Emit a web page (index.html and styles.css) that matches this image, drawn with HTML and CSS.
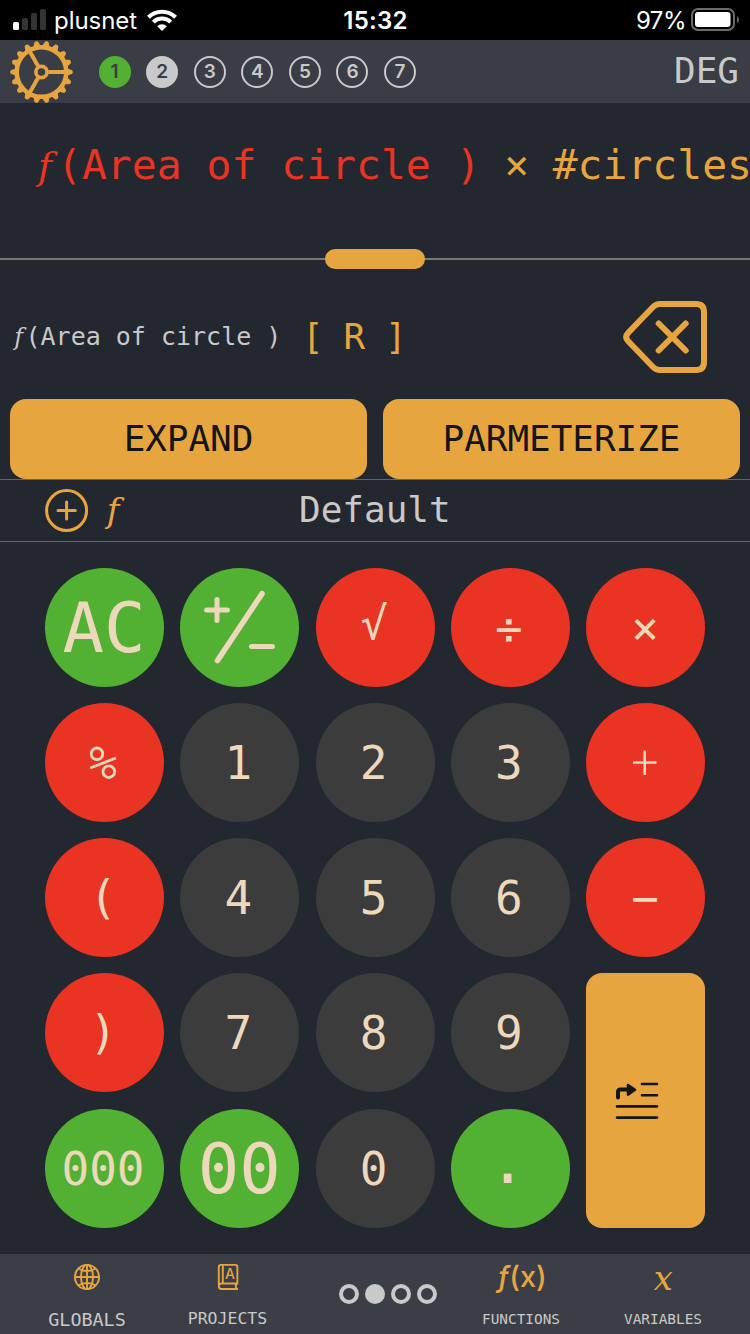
FILE: index.html
```html
<!DOCTYPE html>
<html lang="en">
<head>
<meta charset="utf-8">
<title>Calculator</title>
<link rel="stylesheet" href="styles.css">
</head>
<body>
<div class="app">
  <div class="status">
    <div class="status-left">
      <svg class="signal" width="34" height="22" viewBox="0 0 34 22"><rect x="0" y="13" width="6" height="8" rx="1.5" fill="#fff"/><g fill="#333"><rect x="9" y="9" width="6" height="12" rx="1.5"/><rect x="18" y="4" width="6" height="17" rx="1.5"/><rect x="27" y="0" width="6" height="21" rx="1.5"/></g></svg>
      <span class="carrier">plusnet</span>
      <svg class="wifi" width="30" height="22" viewBox="0 0 30 22"><g fill="none" stroke="#fff" stroke-width="4"><path d="M1.4 8.2A19.5 19.5 0 0 1 28.6 8.2"/><path d="M6.3 13.2A12.3 12.3 0 0 1 23.7 13.2"/></g><path d="M10.2 17.2A6.8 6.8 0 0 1 19.8 17.2L15 22Z" fill="#fff"/></svg>
    </div>
    <span class="clock">15:32</span>
    <div class="status-right">
      <span class="percent">97%</span>
      <svg width="48" height="24" viewBox="0 0 48 24"><rect x="1" y="1" width="42" height="21" rx="6" fill="none" stroke="#6b6b6b" stroke-width="2"/><rect x="4" y="4" width="35.5" height="15" rx="3" fill="#fff"/><path d="M46 8Q48 9 48 11.5Q48 14 46 15Z" fill="#6b6b6b"/></svg>
    </div>
  </div>

  <header class="toolbar">
    <svg class="gear" width="64" height="64" viewBox="-32.500 -32 64 64">
      <defs><path id="teeth" d="M26-3.6L30.600-1.8Q32 0 30.600 1.8L26 3.6ZM-26-3.6L-30.600-1.8Q-32 0-30.600 1.8L-26 3.6Z"/></defs>
      <g fill="#e7a53f"><use href="#teeth"/><use href="#teeth" transform="rotate(20)"/><use href="#teeth" transform="rotate(40)"/><use href="#teeth" transform="rotate(60)"/><use href="#teeth" transform="rotate(80)"/><use href="#teeth" transform="rotate(100)"/><use href="#teeth" transform="rotate(120)"/><use href="#teeth" transform="rotate(140)"/><use href="#teeth" transform="rotate(160)"/></g>
      <g fill="none" stroke="#e7a53f" stroke-width="4"><circle r="24.8" stroke-width="4.500"/><circle r="5.6" stroke-width="3.6"/><path d="M7 0H24M-3.5-6.1L-12-21M-3.5 6.1L-12 21"/></g>
    </svg>
    <div class="tabs">
      <span class="tab tab-green">1</span><span class="tab tab-solid">2</span><span class="tab">3</span><span class="tab">4</span><span class="tab">5</span><span class="tab">6</span><span class="tab">7</span>
    </div>
    <span class="mode">DEG</span>
  </header>

  <section class="expression"><span class="fn">𝑓</span><span>(Area of circle )</span><span class="operator">×</span><span class="variable">#circles</span></section>
  <div class="divider"><span class="handle"></span></div>

  <section class="detail">
    <div class="detail-name"><span class="fn">𝑓</span><span>(Area of circle )</span></div>
    <div class="register">[ R ]</div>
    <svg class="erase" width="86" height="74" viewBox="0 0 86 74" fill="none" stroke="#e7a53f" stroke-width="6" stroke-linecap="round" stroke-linejoin="round"><path d="M38 4H74Q82 4 82 12V62Q82 70 74 70H38Q34 70 31 67L6 41Q2.300 37 6 33L31 7Q34 4 38 4Z"/><path d="M33.700 23.500L60.700 50.500M60.700 23.500L33.700 50.500" transform="translate(3)"/></svg>
  </section>

  <div class="actions"><div class="action">EXPAND</div><div class="action">PARMETERIZE</div></div>

  <div class="layout-bar">
    <svg width="44" height="44" viewBox="0 0 44 44" fill="none" stroke="#e7a53f" stroke-width="3"><circle cx="21.6" cy="21.500" r="20"/><path d="M13 21.500H30.300M21.600 13V30" stroke-linecap="round"/></svg>
    <span class="fn">𝑓</span>
    <span class="layout-name">Default</span>
  </div>

  <main class="keys">
    <div class="key green large">AC</div>
    <div class="key green"><svg width="119" height="119" viewBox="0 0 119 119" fill="none" stroke="#edd8bc" stroke-width="5" stroke-linecap="round"><path d="M26.600 42H47.400M37 31.500V52.500M71.500 78.500H92.400"/><path d="M82 25.700L37.500 92.500" stroke-width="5.600"/></svg></div>
    <div class="key red root">√</div>
    <div class="key red">÷</div>
    <div class="key red sign">×</div>
    <div class="key red"><svg width="119" height="119" viewBox="0 0 119 119" fill="none" stroke="#edd8bc" stroke-width="2.800"><circle cx="52" cy="50.800" r="5.800"/><circle cx="63.800" cy="68.700" r="5.800"/><path d="M45.200 65L71 55"/></svg></div>
    <div class="key">1</div>
    <div class="key">2</div>
    <div class="key">3</div>
    <div class="key red"><svg width="119" height="119" viewBox="0 0 119 119" fill="none" stroke="#edd8bc" stroke-width="2.600"><path d="M47 59.500H70.500M58.700 47.500V72"/></svg></div>
    <div class="key red paren">(</div>
    <div class="key">4</div>
    <div class="key">5</div>
    <div class="key">6</div>
    <div class="key red sign">−</div>
    <div class="key red paren">)</div>
    <div class="key">7</div>
    <div class="key">8</div>
    <div class="key">9</div>
    <div class="key enter"><svg width="44" height="38" viewBox="0 0 44 38" fill="none" stroke="#151515" stroke-width="2.600" stroke-linecap="round"><path d="M27 2H42M27 13.200H42M2 24.400H42M2 35.600H42"/><path d="M3 15.500V10Q3 7.500 5.500 7.500H13" stroke-width="4"/><path d="M13 3L20 7.800L13 12.600Z" fill="#151515" stroke-linejoin="round"/></svg></div>
    <div class="key green">000</div>
    <div class="key green large">00</div>
    <div class="key">0</div>
    <div class="key green point">.</div>
  </main>

  <footer class="nav">
    <div class="nav-item globals">
      <svg width="28" height="28" viewBox="0 0 28 28" fill="none" stroke="#e7a53f" stroke-width="1.900"><circle cx="14" cy="14" r="12.100"/><ellipse cx="14" cy="14" rx="6" ry="12.100"/><path d="M14 2V26M2 14H26M5 5.500Q14 10.500 23 5.500M5 22.500Q14 17.500 23 22.500"/></svg>
      <span>GLOBALS</span>
    </div>
    <div class="nav-item projects">
      <svg width="28" height="28" viewBox="0 0 28 28" fill="none" stroke="#e7a53f" stroke-width="1.900" stroke-linejoin="round"><path d="M24 26H7.500Q4.800 26 4.800 23V4.200Q4.800 1.900 7 1.900H21.300Q23.400 1.900 23.400 4.200V20.500H7.500Q5 20.500 4.800 23M8.800 2V20.500M23 20.500Q20.500 23 23 26"/><text class="book-letter" x="16" y="16" text-anchor="middle">A</text></svg>
      <span>PROJECTS</span>
    </div>
    <svg class="pages" width="100" height="22" viewBox="0 0 100 22" fill="none" stroke="#c9c9c9" stroke-width="4"><circle cx="11" cy="11" r="8"/><circle cx="37" cy="11" r="8" fill="#c9c9c9"/><circle cx="63" cy="11" r="8"/><circle cx="89" cy="11" r="8"/></svg>
    <div class="nav-item functions">
      <div class="fx"><i>ƒ</i><span>(x)</span></div>
      <span>FUNCTIONS</span>
    </div>
    <div class="nav-item variables">
      <div class="var-x">𝑥</div>
      <span>VARIABLES</span>
    </div>
  </footer>
</div>
</body>
</html>
```

FILE: styles.css
```css
* { box-sizing: border-box; }
body { margin: 0; background: #23272f; }
.app {
  width: 750px; height: 1334px; overflow: hidden;
  display: flex; flex-direction: column;
  background: #23272f; color: #c9c9c9;
  font-family: "DejaVu Sans Mono", monospace; white-space: pre;
}
svg { display: block; flex: none; }
.fn { font-family: "DejaVu Math TeX Gyre", "Liberation Serif", serif; }

.status {
  height: 40px; flex: none; padding: 0 11px 0 13px;
  display: grid; grid-template-columns: 1fr auto 1fr; align-items: center;
  background: #000; color: #fff; font: 24px/38px Inter, sans-serif;
}
.status-left, .status-right { display: flex; align-items: center; height: 40px; }
.carrier { margin-left: 7px; width: 87px; letter-spacing: -0.05px; padding-top: 1px; }
.wifi { margin-left: 6px; }
.clock { font-weight: 600; letter-spacing: 0.3px; margin-left: -1px; padding-top: 1px; }
.status-right { justify-content: flex-end; gap: 5px; }
.percent { letter-spacing: -0.5px; padding-top: 1px; }

.toolbar {
  height: 63px; flex: none; display: flex; align-items: center;
  padding: 0 11px 0 9px; background: #3b3d46;
}
.tabs { display: flex; gap: 15.6px; margin-left: 25.500px; }
.tab {
  width: 32px; height: 32px; border: 2.900px solid #c9c9c9; border-radius: 50%;
  font: 600 19px/27px Inter, sans-serif; text-align: center;
}
.tab-green { background: #52b132; border-color: #52b132; color: #3b3d46; }
.tab-solid { background: #c9c9c9; color: #3b3d46; }
.mode { margin-left: auto; font-size: 36px; padding-bottom: 2px; }

.expression {
  height: 155px; flex: none; display: flex; align-items: baseline;
  padding: 37px 0 0 32.500px; color: #e93323; font-size: 41.400px; line-height: 50px;
}
.expression > span { flex: none; }
.expression .fn { width: 24.500px; font-size: 38px; line-height: 50px; }
.expression .operator { width: 72px; text-align: center; color: #e7a53f; }
.variable { color: #e7a53f; }
.divider { height: 2px; flex: none; display: flex; justify-content: center; align-items: center; background: #777876; }
.handle { width: 100px; height: 20px; flex: none; border-radius: 10px; background: #e7a53f; }

.detail { height: 139px; flex: none; display: flex; align-items: center; padding: 15px 42px 0 11px; }
.detail-name { display: flex; align-items: baseline; font-size: 25px; line-height: 40px; }
.detail-name .fn { width: 14.500px; font-size: 23.500px; line-height: 40px; }
.register { margin-left: 20.500px; color: #e7a53f; font-size: 36px; letter-spacing: -0.900px; padding-bottom: 1px; }
.erase { margin-left: auto; margin-top: -1px; }

.actions { height: 80px; flex: none; display: grid; grid-template-columns: 1fr 1fr; gap: 16px; padding: 0 10px; }
.action { border-radius: 16px; background: #e7a53f; color: #151515; font-size: 36px; line-height: 80px; text-align: center; letter-spacing: -0.050px; }

.layout-bar {
  height: 63px; flex: none; display: grid; grid-template-columns: 44px 210px 152px; align-items: center;
  padding-left: 45px; border: solid #62656a; border-width: 1px 0;
  color: #e7a53f; font-size: 36px;
}
.layout-bar .fn { padding: 3px 0 0 13px; font-size: 34px; line-height: 50px; }
.layout-name { color: #c9c9c9; padding-bottom: 2px; }

.keys {
  height: 712px; flex: none; padding: 25.700px 45px 26.300px;
  display: grid; grid-template: repeat(5, 119px) / repeat(5, 119px);
  justify-content: space-between; align-content: space-between;
}
.key {
  display: flex; align-items: center; justify-content: center;
  border-radius: 60px; background: #3c3c3c; color: #edd8bc; font-size: 46px;
  padding: 1px 3px 0 0;
}
.key:has(svg) { padding: 0; }
.green { background: #52b132; }
.red { background: #e93323; }
.large { font-size: 69px; padding-right: 1px; }
.sign { padding-right: 1px; }
.root { padding: 0 2px 7px 0; font-size: 45px; }
.paren { padding: 0 3px 2px 0; }
.point { font-size: 62px; padding: 0 5px 14px 0; }
.enter { grid-area: 4 / 5 / 6 / 6; border-radius: 16px; background: #e7a53f; }
.key.enter { padding-right: 17px; }

.nav {
  height: 80px; flex: none; display: grid; grid-template-columns: 174px 107px 187px 106px 178px;
  background: #3c3e47;
}
.nav-item { display: flex; flex-direction: column; align-items: center; padding-top: 9px; }
.nav-item > span { height: 28px; line-height: 28px; margin-top: 14px; }
.globals > span { font-size: 18.400px; margin-top: 15px; }
.projects > span { font-size: 16.500px; }
.functions > span, .variables > span { font-size: 14.400px; }
.book-letter { font: 500 14px Inter, sans-serif; fill: #e7a53f; stroke: none; }
.pages { align-self: center; justify-self: center; margin-left: 26px; }
.fx { height: 28px; font: 500 29px/27px Inter, sans-serif; color: #e7a53f; padding-left: 2px; }
.var-x { height: 28px; font: 34px/34px "DejaVu Math TeX Gyre", "Liberation Serif", serif; color: #e7a53f; }
```
